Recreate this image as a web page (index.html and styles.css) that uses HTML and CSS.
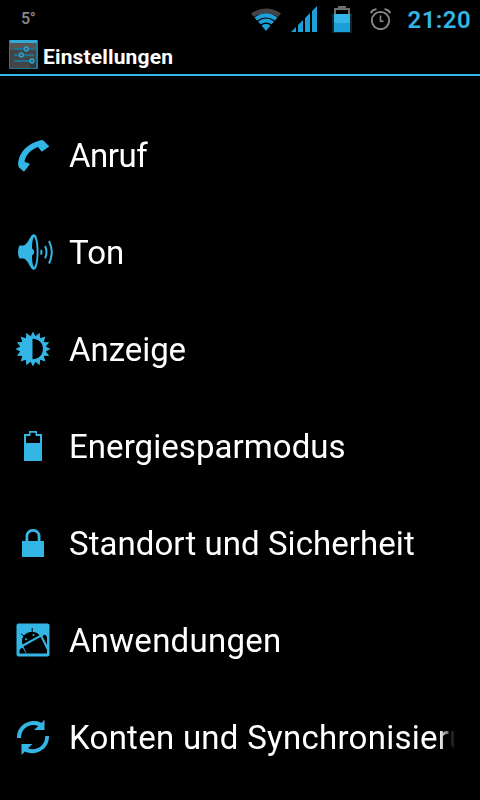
FILE: index.html
```html
<!DOCTYPE html>
<html lang="de">
<head>
    <meta charset="UTF-8">
    <meta name="viewport" content="width=device-width, initial-scale=1.0">
    <title>Einstellungen</title>
    <link rel="stylesheet" href="styles.css">
</head>
<body>
    <div class="status-bar">
        <span class="temperature">5°</span>
        <div class="status-icons">
            <svg class="wifi" width="32" height="24" viewBox="0 0 32 24">
                <path fill="#444" d="M1 5.500Q16-4.500 31 5.500L28 9Q16 1.500 4 9Z"/>
                <path fill="#1c9fd6" d="M4.500 9.500Q16 1 27.500 9.500L25 12.500Q16 6.500 7 12.500ZM8 13.500Q16 7.500 24 13.500L21.500 16.300Q16 12.500 10.500 16.300ZM11.500 17.500Q16 13.800 20.500 17.500L16 23Z"/>
            </svg>
            <svg class="signal" width="27" height="26" viewBox="0 0 27 26">
                <path fill="#1c9fd6" d="M0 26L5 21V26ZM7 26V19L12 14V26ZM14 26V12L19 7V26ZM21 26V5L26 0V26Z"/>
            </svg>
            <svg class="battery" width="20" height="28" viewBox="0 0 20 28">
                <path fill="#10242c" d="M0 7H20V27H0Z"/>
                <path fill="#000" d="M1 2H19V8H1Z"/>
                <path fill="#6e6e6e" d="M6 0H14V2H18V8H16V4H4V8H2V2H6Z"/>
                <path fill="#33b5e5" d="M2 8H18V17H2Z"/>
                <path fill="#1c9fd6" d="M2 17H18V26H2Z"/>
            </svg>
            <svg class="alarm" width="22" height="22" viewBox="0 0 22 22">
                <g fill="none" stroke="#8c8c8c">
                    <circle cx="10.500" cy="12.500" r="8.700" stroke-width="1.800"/>
                    <path stroke-width="1.800" d="M.8 5Q2.500 1.600 6.500 1.200M20.200 5Q18.500 1.600 14.500 1.200"/>
                    <path stroke-width="1.500" d="M10.500 7.500V13.200H13.500"/>
                </g>
            </svg>
        </div>
        <span class="clock">21:20</span>
    </div>

    <header>
        <svg class="app-icon" width="30" height="30" viewBox="0 0 30 30">
            <rect x="0" y="0" width="29" height="29" rx="1" fill="#1f7899"/>
            <rect x="1" y="0" width="27" height="3" fill="#33a9d6"/>
            <rect x="1" y="3" width="26" height="25" fill="#444"/>
            <path fill="#555" d="M1 3H27V10H1Z"/>
            <path fill="#303a3e" d="M21 20H27V28H21Z"/>
            <path stroke="#1d7396" stroke-width="2" d="M5 9H25M5 15.300H25M5 21H23"/>
            <g fill="#3c4a50" stroke="#2a9fcb" stroke-width="1.600">
                <circle cx="17.300" cy="9" r="1.900"/>
                <circle cx="12.300" cy="15" r="1.900"/>
                <circle cx="23" cy="21" r="1.900"/>
            </g>
        </svg>
        <h1>Einstellungen</h1>
    </header>

    <main>
        <ul class="settings-list">
            <li>
                <svg class="icon" viewBox="0 0 40 41">
                    <path d="M36.300 11.500L31 6Q29.500 4.600 27.500 5.200C15 8.500 7 16 5.200 27Q4.600 31 6 32.500L11 36.700L17 29Q15 27.500 11.500 27C12.500 20 18 14.500 25 12L28.700 16.800Z"/>
                </svg>
                <span class="label narrow">Anruf</span>
            </li>
            <li>
                <svg class="icon" viewBox="0 0 40 41">
                    <path fill-rule="evenodd" d="M6.500 13.500H11C15 11 16.500 6 18.500 3.500Q20.500 1.500 22.500 3C26.500 7.500 26.500 32.500 22.500 37Q20.500 38.800 18.500 36.500C16.500 34 15 29 11 26.500H6.500Q5 24 5 20T6.500 13.500ZM21 5C19.500 7 19 12 19 16.500Q21.200 17.500 21.200 20T19 23.500C19 28 19.500 33 21 35C24.500 32 24.500 8 21 5Z"/>
                    <path class="line" d="M28 18Q29 20.300 28 22.700M32 14Q35 20 32 26.200M36 9Q41.500 20 36 31.500"/>
                </svg>
                <span class="label">Ton</span>
            </li>
            <li>
                <svg class="icon" viewBox="0 0 40 41">
                    <path fill-rule="evenodd" d="M20 2.500L22.400 7.200L26.700 3.800L27.100 9.300L32.400 7.600L30.700 12.900L36.200 13.300L32.800 17.600L37.500 20L32.800 22.400L36.200 26.700L30.700 27.100L32.400 32.400L27.100 30.700L26.700 36.200L22.400 32.800L20 37.500L17.600 32.800L13.300 36.200L12.900 30.700L7.600 32.400L9.300 27.100L3.800 26.700L7.200 22.400L2.500 20L7.200 17.600L3.800 13.300L9.300 12.900L7.600 7.600L12.900 9.300L13.300 3.800L17.600 7.200ZM19.500 9.800V30.200C33.500 30.200 33.500 9.800 19.500 9.800Z"/>
                </svg>
                <span class="label fit">Anzeige</span>
            </li>
            <li>
                <svg class="icon" viewBox="0 0 40 41">
                    <path fill-rule="evenodd" d="M16 5H24V8H29V35H11V8H16ZM17.500 6.700V10H13V17H27V10H22.500V6.700Z"/>
                </svg>
                <span class="label">Energiesparmodus</span>
            </li>
            <li>
                <svg class="icon" viewBox="0 0 40 41">
                    <path d="M9 18H12.500V13.500C12.500 3.500 27.500 3.500 27.500 13.500V18H31V34H9ZM15.300 18H24.700V13.500C24.700 7.300 15.300 7.300 15.300 13.500Z" fill-rule="evenodd"/>
                </svg>
                <span class="label">Standort und Sicherheit</span>
            </li>
            <li>
                <svg class="icon" viewBox="0 0 40 41">
                    <rect x="3.500" y="3.500" width="33" height="33" rx="2"/>
                    <g fill="#000">
                        <path d="M9.500 24.500C7.500 19 11 13.500 16 12.300C20.500 11.300 25 12.500 26.500 15.300Z"/>
                        <path d="M10.500 26.500L27.500 17L34 30V33.500H13.500Z"/>
                        <path d="M6.500 33.500V30.500Q7.500 27.500 10 28.200L13 33.500Z"/>
                        <path d="M29.500 16.500Q30 14.500 32 14.700Q34 15.500 34 18V25Z"/>
                        <path stroke="#000" stroke-width="1" d="M19.200 8V13M8 14L12 16.500"/>
                    </g>
                    <circle cx="13.200" cy="19.300" r="1"/>
                    <circle cx="20.500" cy="15" r="1"/>
                </svg>
                <span class="label wide">Anwendungen</span>
            </li>
            <li>
                <svg class="icon" viewBox="0 0 40 41">
                    <path d="M4 21C3.500 7 19 .5 28.500 6L31.500 2.500V13H21L25.300 9C17.500 5.500 8 10.500 8 21Z"/>
                    <path d="M36 19C36.500 33 21.500 39.500 12 34.500L8.500 38V27H19.500L15 31.200C22.500 34.500 32.500 29.500 32.300 19Z"/>
                </svg>
                <span class="label wide">Konten und Synchronisierung</span>
            </li>
        </ul>
    </main>
</body>
</html>
```
FILE: styles.css
```css
* {
    box-sizing: border-box;
}

body {
    background-color: #000;
    color: #fff;
    font-family: Roboto, sans-serif;
    margin: 0;
    height: 800px;
    overflow: hidden;
}

.status-bar {
    display: flex;
    align-items: center;
    height: 38px;
    padding: 0 9px 0 21px;
}

.temperature {
    color: #8c8c8c;
    font-size: 16px;
    font-weight: 500;
    letter-spacing: -0.3px;
    margin-top: -2px;
}

.status-icons {
    display: flex;
    align-items: flex-start;
    height: 26px;
    margin-left: auto;
}

.wifi {
    margin: 2px 9px 0 0;
}

.signal {
    margin-right: 14px;
}

.battery {
    margin-right: 18px;
}

.alarm {
    margin: 2px 16px 0 0;
}

.clock {
    color: #33b5e5;
    font-size: 24px;
    font-weight: 600;
    letter-spacing: 0.4px;
    margin-top: 2px;
}

header {
    display: flex;
    align-items: center;
    height: 38px;
    padding: 0 9px;
    border-bottom: 2px solid #33b5e5;
}

.app-icon {
    margin-top: -3px;
}

h1 {
    margin: 2px 0 0 4px;
    font-size: 21px;
    font-weight: 700;
    letter-spacing: 0.15px;
}

.settings-list {
    list-style: none;
    margin: 31px 0 0;
    padding: 0;
}

.settings-list li {
    display: flex;
    align-items: center;
    height: 97px;
    padding: 0 25px 0 13px;
}

.icon {
    flex: none;
    width: 40px;
    height: 41px;
    fill: #33b5e5;
}

.line {
    fill: none;
    stroke: #33b5e5;
    stroke-width: 2;
}

.label {
    flex: 1;
    margin-left: 16px;
    overflow: hidden;
    white-space: nowrap;
    font-size: 33px;
    letter-spacing: 0.06px;
    /* long names fade out at the right edge */
    -webkit-mask-image: linear-gradient(to left, transparent 0, #000 16px);
    mask-image: linear-gradient(to left, transparent 0, #000 16px);
}

.label.narrow {
    letter-spacing: -0.5px;
}

.label.fit {
    letter-spacing: -0.05px;
}

.label.wide {
    letter-spacing: 0.27px;
}
```
